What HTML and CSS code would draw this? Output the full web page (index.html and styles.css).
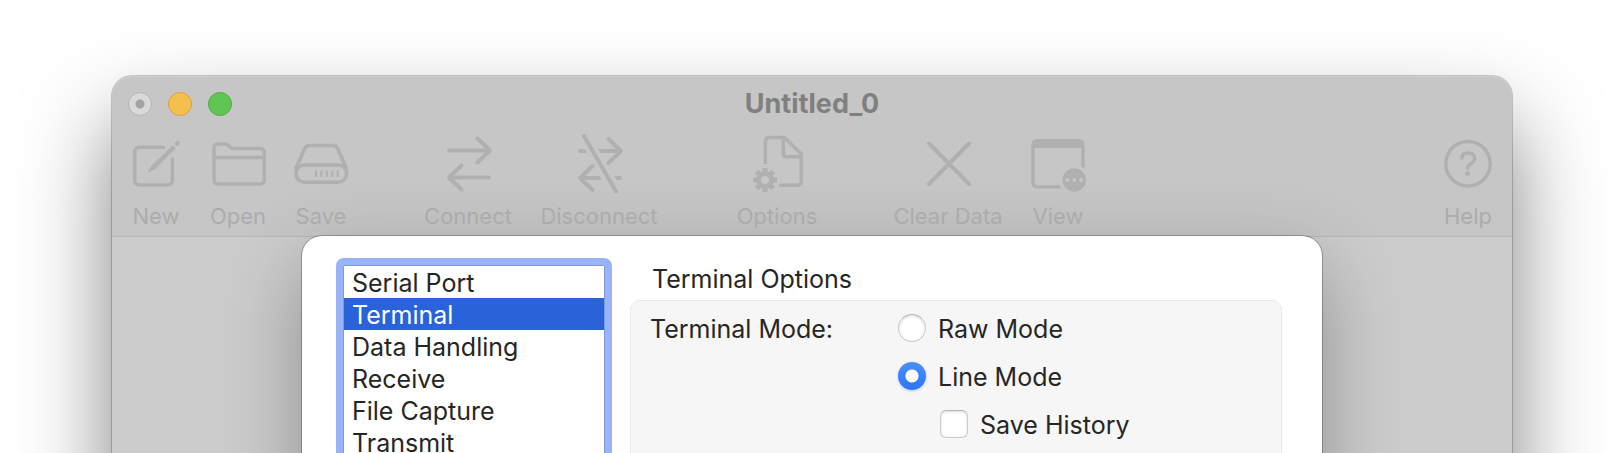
FILE: index.html
```html
<!DOCTYPE html>
<html lang="en">
<head>
<meta charset="utf-8">
<title>Untitled_0</title>
<link rel="stylesheet" href="styles.css">
</head>
<body>
<main class="window">
  <header class="header">
    <div class="titlebar">
      <div class="lights">
        <button class="light light-close" type="button" aria-label="Close"></button>
        <button class="light light-minimize" type="button" aria-label="Minimize"></button>
        <button class="light light-zoom" type="button" aria-label="Zoom"></button>
      </div>
      <h1 class="title">Untitled_0</h1>
    </div>
    <div class="toolbar">
      <div class="group">
        <button class="tool" type="button">
          <svg class="icon" viewBox="0 0 60 60" aria-hidden="true">
            <path d="M37.5 13.2H13.2a4.500 4.500 0 0 0-4.500 4.500V46.500a4.500 4.500 0 0 0 4.500 4.500H41.800a4.500 4.500 0 0 0 4.500-4.500V25"/>
            <path class="solid" d="M46.800 11.300L49.800 14.300L29 35L22.600 38.300Q21.800 38.200 22 37.400L25.800 31.500Z"/>
            <path class="solid" d="M48.300 9.800L50.300 7.400Q51.800 6.300 53 7.500T53.200 10.300L51.200 12.500Z"/>
          </svg>
          <span>New</span>
        </button>
        <button class="tool" type="button">
          <svg class="icon" viewBox="0 0 60 60" aria-hidden="true">
            <path d="M6 23.400V14.500Q6 10 10.500 10H16Q18.500 10 20.500 11.600L22.500 13.400Q24 14.600 26.500 14.600H52Q56.300 14.600 56.300 19V45.500Q56.300 49.900 52 49.900H10.500Q6 49.900 6 45.500V23.400H56.300"/>
          </svg>
          <span>Open</span>
        </button>
        <button class="tool tool-save" type="button">
          <svg class="icon" viewBox="0 0 60 60" aria-hidden="true">
            <path d="M5 34L13.500 15Q15 11.600 18.500 11.600H41.800Q45.300 11.600 46.800 15L55.300 34M13.500 31H47a8.500 8.500 0 0 1 0 17.300H13.500a8.500 8.500 0 0 1 0-17.300Z"/>
            <path class="fine" d="M25 36.500v6.500M30.400 36.500v6.500M35.900 36.500v6.500M41.300 36.500v6.500M46.700 36.500v6.500"/>
          </svg>
          <span>Save</span>
        </button>
      </div>
      <div class="group">
        <button class="tool tool-connect" type="button">
          <svg class="icon" viewBox="0 0 60 60" aria-hidden="true">
            <path class="bold" d="M11 16.500H52M39.500 4.500L52 16.500L39.500 28.500M51 43.500H11M23.500 31.500L11 43.500L23.500 55.500"/>
          </svg>
          <span>Connect</span>
        </button>
        <button class="tool tool-disconnect" type="button">
          <svg class="icon" viewBox="0 0 60 60" aria-hidden="true">
            <path class="bold" d="M39.500 5L52 17L39.500 29M23.500 32L11 44L23.500 56M15 2L47 57.500"/>
            <path class="solid" d="M11 15H15.500L18 19H11Q9 19 9 17T11 15ZM29 15H51V19H31.500ZM11 42H30.500L33 46H11ZM45 42H51Q53 42 53 44T51 46H47.500Z"/>
          </svg>
          <span>Disconnect</span>
        </button>
      </div>
      <div class="group">
        <button class="tool tool-options" type="button">
          <svg class="icon" viewBox="0 0 60 60" aria-hidden="true">
            <path class="butt" d="M18.300 30V8Q18.300 3.600 22.700 3.600H37.500L54.300 20V47Q54.300 51.300 50 51.300H32M36.300 4V20Q36.300 22.700 39 22.700H54"/>
            <g transform="translate(18 46)">
              <circle r="6.500" class="gear"/>
              <path class="teeth" d="M0-8V-12M0 8V12M-8 0H-12M8 0H12M-5.700-5.700L-8.400-8.400M5.700 5.700L8.400 8.400M-5.700 5.700L-8.400 8.400M5.700-5.700L8.400-8.400"/>
            </g>
          </svg>
          <span>Options</span>
        </button>
      </div>
      <div class="group">
        <button class="tool tool-clear" type="button">
          <svg class="icon" viewBox="0 0 60 60" aria-hidden="true">
            <path class="bold" d="M11 9.500L51 50M51 9.500L11 50"/>
          </svg>
          <span>Clear Data</span>
        </button>
        <button class="tool" type="button">
          <svg class="icon" viewBox="0 0 60 60" aria-hidden="true">
            <path class="solid" fill-rule="evenodd" d="M9.500 5H50.500Q56.700 5 56.700 11V34.500L53.200 32.500V14H6.700V48Q6.700 51.200 10 51.200H31.500L33.500 54.500H9.500Q3.300 54.500 3.300 48.500V11Q3.300 5 9.500 5Z"/>
            <path class="solid" fill-rule="evenodd" d="M46.300 34.200a11.800 11.800 0 1 1 0 23.600a11.800 11.800 0 1 1 0-23.600ZM39.600 44a2 2 0 1 0 0 4a2 2 0 1 0 0-4ZM46.300 44a2 2 0 1 0 0 4a2 2 0 1 0 0-4ZM53 44a2 2 0 1 0 0 4a2 2 0 1 0 0-4Z"/>
          </svg>
          <span>View</span>
        </button>
      </div>
      <div class="group group-end">
        <button class="tool" type="button">
          <svg class="icon" viewBox="0 0 60 60" aria-hidden="true">
            <circle cx="30" cy="29.700" r="22.200"/>
            <path d="M23.800 24.200C24 20.800 26.500 19 30.200 19C34 19 36.700 21 36.700 24.300C36.700 27 35.200 28.300 32.800 29.800C30.500 31.300 29.500 32.300 29.500 34.300"/>
            <circle class="solid" cx="29.500" cy="39.600" r="2.500"/>
          </svg>
          <span>Help</span>
        </button>
      </div>
    </div>
  </header>

  <section class="sheet" role="dialog" aria-label="Options">
    <ul class="list" role="listbox" aria-label="Categories" tabindex="0">
      <li class="row" role="option">Serial Port</li>
      <li class="row row-selected" role="option" aria-selected="true">Terminal</li>
      <li class="row" role="option">Data Handling</li>
      <li class="row" role="option">Receive</li>
      <li class="row" role="option">File Capture</li>
      <li class="row" role="option">Transmit</li>
    </ul>
    <div class="pane">
      <h2 class="pane-title">Terminal Options</h2>
      <div class="box" role="radiogroup" aria-labelledby="mode-label">
        <span class="field-label" id="mode-label">Terminal Mode:</span>
        <div class="choices">
          <label class="choice"><input class="control radio" type="radio" name="mode">Raw Mode</label>
          <label class="choice"><input class="control radio" type="radio" name="mode" checked>Line Mode</label>
          <label class="choice choice-nested"><input class="control checkbox" type="checkbox">Save History</label>
        </div>
      </div>
    </div>
  </section>
</main>
</body>
</html>
```

FILE: styles.css
```css
* {
  box-sizing: border-box;
}

body {
  margin: 0;
  height: 100vh;
  overflow: hidden;
  background: #fff;
  color: #262626;
  font-family: Inter, "Liberation Sans", sans-serif;
  font-size: 25px;
  line-height: 32px;
}

button {
  padding: 0;
  border: 0;
  background: none;
  color: inherit;
  font: inherit;
}

.window {
  min-height: 200vh;
  margin: 76px 112px 0;
  border-radius: 20px;
  background: #cccccc;
  box-shadow: 0 0 0 1px rgba(0, 0, 0, 0.2), 0 48px 88px rgba(0, 0, 0, 0.5);
}

.header {
  border-bottom: 1px solid #b9b9b9;
  border-radius: 20px 20px 0 0;
  background: #c6c6c6;
  box-shadow: inset 0 1px 0 #d0d0d0;
}

.titlebar {
  display: grid;
  grid-template-columns: 1fr auto 1fr;
  align-items: center;
  height: 56px;
  padding: 0 16px;
}

.lights {
  display: flex;
  gap: 16px;
}

.light {
  width: 24px;
  height: 24px;
  border: 1px solid #b4b4b4;
  border-radius: 50%;
}

.light-close {
  background: radial-gradient(circle, #a3a3a3 4px, #d9d9d9 5px);
}

.light-minimize {
  border-color: #dfa23c;
  background: #f5bf4f;
}

.light-zoom {
  border-color: #4fad3d;
  background: #61c554;
}

.title {
  margin: 0;
  color: #808080;
  font-size: 27px;
  font-weight: 700;
  line-height: 32px;
}

.toolbar {
  display: flex;
  gap: 76px;
  padding: 2px 16px 6px;
}

.group {
  display: flex;
  gap: 26px;
}

.group-end {
  margin-left: auto;
}

.tool {
  display: flex;
  flex-direction: column;
  align-items: center;
  gap: 8px;
  width: 56px;
  color: #acacac;
  font-size: 22px;
  line-height: 28px;
  white-space: nowrap;
}

.tool-save {
  width: 58px;
}

.tool-connect {
  width: 84px;
}

.tool-disconnect {
  width: 126px;
}

.tool-options {
  width: 78px;
}

.tool-clear {
  width: 112px;
}

.icon {
  flex: none;
  width: 60px;
  height: 60px;
  fill: none;
  stroke: #b0b0b0;
  stroke-width: 3.5;
  stroke-linecap: round;
  stroke-linejoin: round;
}

.icon .solid {
  fill: #b0b0b0;
  stroke: none;
}

.icon .bold {
  stroke-width: 4;
}

.icon .fine {
  stroke-width: 2;
  stroke-linecap: butt;
}

.icon .butt {
  stroke-linecap: butt;
}

.icon .gear {
  stroke-width: 5;
}

.icon .teeth {
  stroke-width: 5;
  stroke-linecap: butt;
}

.sheet {
  display: flex;
  gap: 25px;
  min-height: 180vh;
  margin: -1px 190px 0;
  padding: 29px 40px 40px 41px;
  border-radius: 20px;
  background: #fff;
  box-shadow: 0 0 0 1px rgba(0, 0, 0, 0.25), 0 30px 80px rgba(0, 0, 0, 0.3);
}

.list {
  flex: none;
  width: 262px;
  margin: 0;
  padding: 0;
  border: 1px solid #7f9ade;
  outline: 7px solid #98b3f8;
  border-radius: 1px;
  background: #fff;
  list-style: none;
}

.row {
  height: 32px;
  padding: 0 8px;
  line-height: 34px;
}

.row-selected {
  background: #2962d9;
  color: #fff;
}

.pane {
  display: flex;
  flex: 1;
  flex-direction: column;
}

.pane-title {
  margin: 0;
  padding: 0 22px 7px;
  font-size: 25px;
  font-weight: 400;
  line-height: 28px;
}

.box {
  display: flex;
  flex: 1;
  padding: 11px 19px;
  border: 1px solid #e9e9e9;
  border-radius: 10px;
  background: #f6f6f6;
}

.field-label {
  width: 248px;
  line-height: 34px;
}

.choices {
  display: flex;
  flex-direction: column;
  gap: 14px;
}

.choice {
  display: flex;
  align-items: center;
  gap: 12px;
  line-height: 34px;
}

.choice-nested {
  padding-left: 42px;
}

.control {
  flex: none;
  width: 28px;
  height: 28px;
  margin: 0 0 2px;
  border: 1px solid #cbcbcb;
  border-top-color: #b4b4b4;
  background: #fff;
  box-shadow: inset 0 1px 3px rgba(0, 0, 0, 0.15);
  appearance: none;
}

.radio {
  border-radius: 50%;
}

.radio:checked {
  border: 0;
  background: radial-gradient(circle, #fff 6px, transparent 7px), linear-gradient(#4a90f8, #2f74f7);
  box-shadow: 0 1px 3px rgba(47, 116, 247, 0.3);
}

.checkbox {
  border-radius: 6px;
}
```
